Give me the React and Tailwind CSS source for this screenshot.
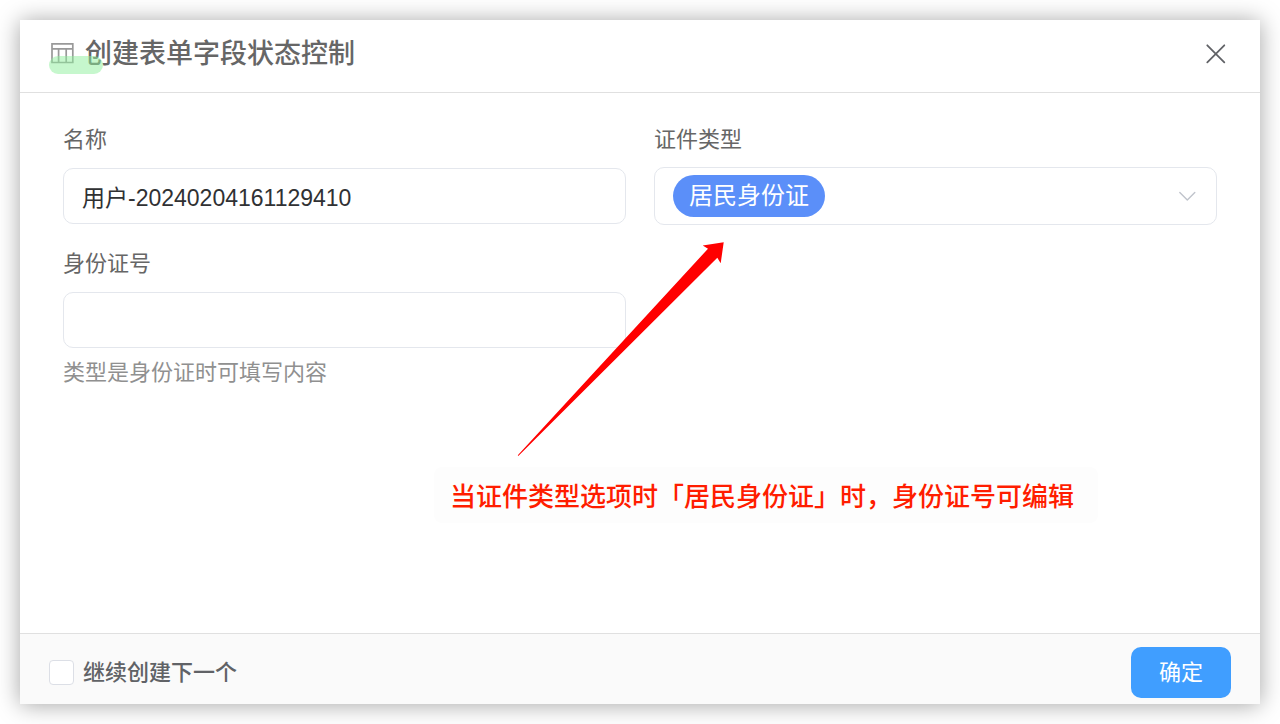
import { useState } from "react";

const control =
  "h-14 w-full rounded-[10px] border border-[#e4e7ed] bg-white px-[18px] text-[23px] text-[#303133] outline-none focus:border-[#409eff]";
const label = "text-[22px] leading-8 text-[#666666]";

function TableIcon() {
  return (
    <svg className="h-[22px] w-6 shrink-0 text-[#999999]" viewBox="0 0 24 22" fill="none" stroke="currentColor" strokeWidth="1.7" aria-hidden="true">
      <path d="M2 0.900h20.800v18.600H2zM2 5.800h20.800M8.600 5.800v13.700M16.200 5.800v13.700" />
    </svg>
  );
}

function Header() {
  return (
    <header className="flex items-start justify-between border-b border-[#e0e0e0] pt-[14px] pr-[33px] pb-[18px] pl-[30px]">
      <div className="relative flex items-center gap-[11px]">
        <TableIcon />
        <h1 className="text-[27px] leading-10 font-medium text-[#666666]">创建表单字段状态控制</h1>
        <span className="absolute top-[22px] -left-px h-[18px] w-[54px] rounded-[9px] bg-[#8eef9c]/50" />
      </div>
      <button type="button" aria-label="关闭" className="flex h-10 items-center text-[#606266]">
        <svg className="size-[22px]" viewBox="0 0 22 22" fill="none" stroke="currentColor" strokeWidth="1.8" strokeLinecap="round" aria-hidden="true">
          <path d="M2.300 2.300l17 17M19.300 2.300l-17 17" />
        </svg>
      </button>
    </header>
  );
}

function Note() {
  return (
    <>
      <svg className="pointer-events-none absolute top-[149px] left-[497px] h-[216px] w-[208px]" viewBox="0 0 208 216" aria-hidden="true">
        <path d="M0.800 213.300L191 6.700 185.700 3.500 206.700 0.200 203.700 21.300 200.300 15.700 1.300 213.900z" fill="#ff0000" />
      </svg>
      <p className="absolute top-[374px] left-[414px] rounded-lg bg-[#fdfdfd] pt-2.5 pr-6 pb-1.5 pl-4 text-[26px] leading-10 font-medium whitespace-nowrap text-[#ff1d00]">
        当证件类型选项时「居民身份证」时，身份证号可编辑
      </p>
    </>
  );
}

export default function App() {
  const [name, setName] = useState("用户-20240204161129410");
  const [idNumber, setIdNumber] = useState("");
  return (
    <div className="flex min-h-screen bg-white p-5 font-['Liberation_Sans','Noto_Sans_CJK_SC',sans-serif]" lang="zh-CN">
      <form className="flex flex-1 flex-col bg-white shadow-[0_1px_22px_rgba(0,0,0,0.36)]" onSubmit={(e) => e.preventDefault()}>
        <Header />
        <div className="relative grid flex-1 grid-cols-2 content-start gap-x-7 gap-y-[23px] px-[43px] pt-[31px]">
          <div className="flex flex-col gap-3">
            <label htmlFor="name" className={label}>名称</label>
            <input id="name" className={control} value={name} onChange={(e) => setName(e.target.value)} />
          </div>
          <div className="flex flex-col gap-[11px]">
            <label htmlFor="type" className={label}>证件类型</label>
            <div className="flex h-[58px] items-center justify-between rounded-[10px] border border-[#e4e7ed] px-[18px]">
              <select id="type" className="h-[42px] appearance-none rounded-full bg-[#5b8ff9] px-4 text-[24px] text-white outline-none">
                <option>居民身份证</option>
              </select>
              <svg className="h-5 w-[22px] text-[#c0c4cc]" viewBox="0 0 22 20" fill="none" stroke="currentColor" strokeWidth="1.4" strokeLinecap="round" strokeLinejoin="round" aria-hidden="true">
                <path d="M3.800 6.500l7.500 7.500 7.500-7.500" />
              </svg>
            </div>
          </div>
          <div className="flex flex-col">
            <label htmlFor="id-number" className={label}>身份证号</label>
            <input id="id-number" className={`${control} mt-3`} value={idNumber} onChange={(e) => setIdNumber(e.target.value)} aria-describedby="id-hint" />
            <p id="id-hint" className="mt-[9px] text-[22px] leading-8 text-[#909090]">类型是身份证时可填写内容</p>
          </div>
          <Note />
        </div>
        <footer className="flex items-center justify-between border-t border-[#e0e0e0] bg-[#fafafa] pt-[13px] pr-[29px] pb-1.5 pl-[29px]">
          <label className="flex items-center gap-[9px] text-[22px] leading-8 font-medium text-[#606266]">
            <input type="checkbox" className="size-[25px] appearance-none rounded-[4px] border border-[#dcdfe6] bg-white checked:bg-[#409eff]" />
            继续创建下一个
          </label>
          <button type="submit" className="h-[51px] rounded-[10px] bg-[#409eff] px-7 text-[22px] text-white">确定</button>
        </footer>
      </form>
    </div>
  );
}
